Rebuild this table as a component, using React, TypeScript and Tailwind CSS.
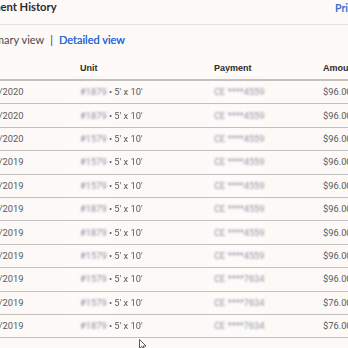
const rows = [
  { date: "12/15/2020", unit: "#1879", card: "CE ****4559", amount: "$96.00" },
  { date: "11/15/2020", unit: "#1879", card: "CE ****4559", amount: "$96.00" },
  { date: "10/15/2020", unit: "#1579", card: "CE ****4559", amount: "$96.00" },
  { date: "12/15/2019", unit: "#1579", card: "CE ****4559", amount: "$96.00" },
  { date: "11/15/2019", unit: "#1579", card: "CE ****4559", amount: "$96.00" },
  { date: "10/15/2019", unit: "#1879", card: "CE ****4559", amount: "$96.00" },
  { date: "09/15/2019", unit: "#1879", card: "CE ****4559", amount: "$96.00" },
  { date: "08/15/2019", unit: "#1579", card: "CE ****4559", amount: "$96.00" },
  { date: "07/15/2019", unit: "#1579", card: "CE ****7634", amount: "$96.00" },
  { date: "06/15/2019", unit: "#1579", card: "CE ****7634", amount: "$76.00" },
  { date: "05/15/2019", unit: "#1879", card: "CE ****7634", amount: "$76.00" },
];

const Redact = ({ left, width }: { left: string; width: string }) => (
  <span
    className={`pointer-events-none absolute top-[-2px] bottom-[-2px] ${left} ${width} bg-white/40 backdrop-blur-[1px]`}
  />
);

const App = () => {
  return (
    <div className="relative h-[348px] w-[348px] overflow-hidden bg-[#fcf9f7] font-['Roboto',sans-serif]">
      <div className="-ml-[26px] w-[440px]">
        <div className="flex h-[25px] items-start border-b border-[#e6e1de]">
          <h1 className="-ml-[1px] w-[362px] font-['Lato',sans-serif] text-[11.2px] leading-[14px] font-bold text-[#2b2b2b]">
            Payment History
          </h1>
          <a className="pt-[1px] font-['Lato',sans-serif] text-[10.5px] leading-[14px] font-bold text-[#3c6fd6]">
            Print
          </a>
        </div>

        <div className="flex h-[30px] items-center gap-[6px] font-['Lato',sans-serif] text-[11px]">
          <span className="text-[#4a4a4a]">Summary view</span>
          <span className="text-[#3a3a3a]">|</span>
          <span className="text-[#2f6bdc] [text-shadow:0_0_0.3px_#2f6bdc]">Detailed view</span>
        </div>

        <div className="grid h-[26px] grid-cols-[106px_134px_109px_1fr] items-center border-b-2 border-[#c4c2c0] pt-[3px] font-['Liberation_Sans',sans-serif] text-[9px] font-bold text-[#2b2b2b]">
          <span></span>
          <span className="relative">
            Unit
            <span className="absolute top-[9px] left-[-15px] h-[4px] w-[42px] bg-white/50" />
          </span>
          <span className="relative">
            Payment
            <span className="absolute top-[9px] left-[-4px] h-[4px] w-[54px] bg-white/50" />
          </span>
          <span>Amount</span>
        </div>

        {rows.map((r) => (
          <div
            key={r.date}
            className="grid h-[23.4px] grid-cols-[106px_134px_109px_1fr] items-center border-b border-[#c3c1bf] text-[9.3px] text-[#5a5a5a]"
          >
            <span>{r.date}</span>
            <span className="relative">
              <Redact left="left-[-15px]" width="w-[42px]" />
              <span className="text-[#8a8a98] blur-[1px]">{r.unit}</span>
              <span> • 5' x 10'</span>
            </span>
            <span className="relative">
              <Redact left="left-[-4px]" width="w-[54px]" />
              <span className="text-[#90909c] blur-[1px]">{r.card}</span>
            </span>
            <span>{r.amount}</span>
          </div>
        ))}
      </div>

      <svg
        className="absolute top-[339px] left-[139px]"
        width="8"
        height="12"
        viewBox="0 0 8 12"
      >
        <path d="M0.5 0.5 L0.5 9.5 L2.8 7.4 L4.4 11 L5.6 10.5 L4.1 7 L7 7 Z" fill="#fff" stroke="#333" strokeWidth="0.8" />
      </svg>
    </div>
  );
};

export default App;
